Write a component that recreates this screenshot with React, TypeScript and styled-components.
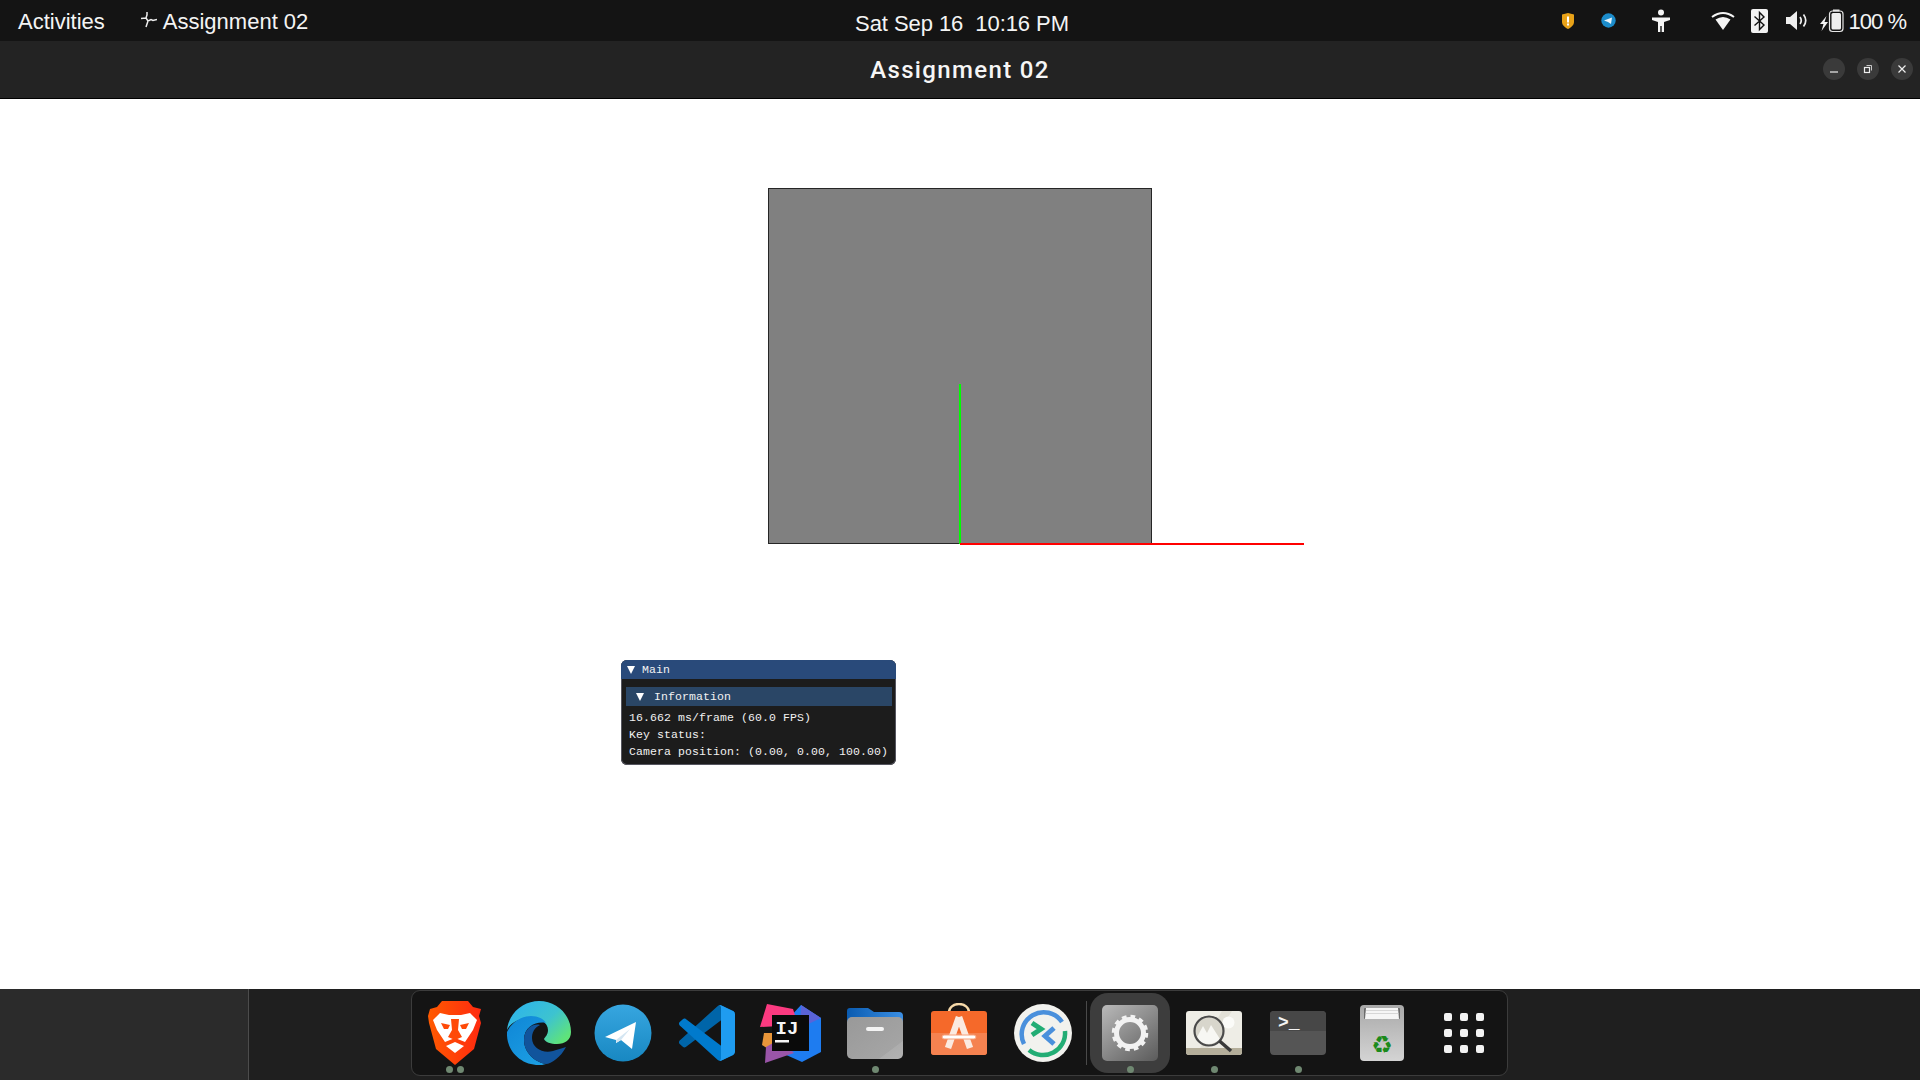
import React from 'react';
import styled, { createGlobalStyle } from 'styled-components';

const Global = createGlobalStyle`
  html, body { margin: 0; padding: 0; background: #fff; overflow: hidden; }
  #root { width: 1920px; height: 1080px; }
  * { box-sizing: border-box; }
`;

const Screen = styled.div`
  width: 1920px; height: 1080px; display: flex; flex-direction: column;
  font-family: "Liberation Sans", Arial, sans-serif; color: #fff;
`;

/* ---------- top bar ---------- */
const TopBar = styled.header`
  height: 41px; flex: none; background: #141414; display: grid;
  grid-template-columns: 1fr auto 1fr; align-items: center;
  font-size: 22px; padding: 0 14px 0 18px;
`;
const TopLeft = styled.div`display: flex; align-items: center;`;
const TopLabel = styled.span<{ $tight?: boolean }>`
  color: #f4f4f4; white-space: nowrap; padding-top: 2px;
  letter-spacing: ${p => (p.$tight ? '-1px' : '0')};
`;
const AppMenu = styled.div`display: flex; align-items: center; gap: 6px; margin-left: 35px;`;
const Clock = styled.div`
  color: #f4f4f4; white-space: pre; padding-top: 6px; font-size: 22px; letter-spacing: -0.07px;
`;
const Tray = styled.div`display: flex; align-items: center; justify-content: flex-end;`;
const TraySlot = styled.span<{ $left: number }>`
  display: flex; align-items: center; margin-left: ${p => p.$left}px;
`;

/* ---------- header bar ---------- */
const HeaderBar = styled.div`
  height: 58px; flex: none; background: #232323; border-bottom: 1px solid #000;
  display: flex; align-items: center; justify-content: center; position: relative;
`;
const Title = styled.h1`
  margin: 0; font: 500 24px Roboto, "Liberation Sans", sans-serif; letter-spacing: 1.35px;
  color: #f6f6f6; white-space: pre;
`;
const WindowControls = styled.div`
  position: absolute; right: 7px; top: 17px; display: flex; gap: 12px;
`;
const WinButton = styled.button`
  width: 22px; height: 22px; border-radius: 50%; border: 0; padding: 0; background: #3a3a3a;
  display: flex; align-items: center; justify-content: center;
`;

/* ---------- GL window canvas ---------- */
const Canvas = styled.main`flex: 1; position: relative; background: #fff; min-height: 0;`;
const Scene = styled.svg`position: absolute; left: 0; top: 0;`;
const ImGuiWindow = styled.section`
  position: absolute; left: 621px; top: 561px; width: 275px; height: 105px;
  background: #1c1c1c; border-radius: 6px; overflow: hidden;
  box-shadow: inset 0 0 0 1px #55555f;
  font: 11.5px "Liberation Mono", "DejaVu Sans Mono", monospace; letter-spacing: 0.1px;
  color: #f2f2f2; white-space: pre;
`;
const ImGuiTitle = styled.div`
  height: 19px; background: #294a7a; display: flex; align-items: center; padding-left: 6px; gap: 7px;
`;
const Triangle = styled.i`
  width: 0; height: 0; border-left: 4.5px solid transparent; border-right: 4.5px solid transparent;
  border-top: 8px solid #fff; display: block;
`;
const ImGuiBody = styled.div`padding: 8px 4px 0 5px;`;
const ImGuiHeader = styled.div`
  height: 19px; background: #2a4666; display: flex; align-items: center; padding-left: 10px; gap: 10px;
`;
const ImGuiLines = styled.div`margin-top: 3px;`;
const ImGuiLine = styled.div`height: 17px; line-height: 17px; padding-left: 3px;`;

/* ---------- dock ---------- */
const DockArea = styled.footer`
  height: 91px; flex: none; background: #1f1f1f; display: flex; padding-top: 1px;
`;
const DockSide = styled.div`
  width: 249px; margin-top: -1px; background: #2b2b2b; border-right: 1px solid #4c4c4c; flex: none;
`;
const Dock = styled.nav`
  margin-left: 162px; width: 1097px; height: 86px; background: #141414;
  border: 1px solid #3c3c3c; border-radius: 9px; padding: 0 1px; display: flex;
`;
const DockItem = styled.div<{ $active?: boolean }>`
  width: 84px; height: 84px; flex: none; position: relative;
  display: flex; align-items: center; justify-content: center;
  &::before {
    content: ""; position: absolute; inset: 2px; border-radius: 18px;
    background: ${p => (p.$active ? '#3d3d3d' : 'transparent')};
  }
  & > svg, & > div { position: relative; }
`;
const DockSep = styled.div`
  width: 1px; height: 64px; background: #4a4a4a; margin: 10px 1px 0 1px; flex: none;
`;
const Dots = styled.div`
  position: absolute !important; left: 0; right: 0; bottom: 2px; display: flex; justify-content: center; gap: 4px;
`;
const Dot = styled.span`width: 7px; height: 7px; border-radius: 50%; background: #6f8871; display: block;`;
const AppGrid = styled.div`
  display: grid; grid-template-columns: repeat(3, 8px); grid-auto-rows: 8px; gap: 8px; margin-left: -4px;
`;
const AppGridCell = styled.span`background: #f2f2f2; border-radius: 2px;`;

/* ---------- icons ---------- */
const AppSpark = () => (
  <svg width="17" height="17" viewBox="0 0 17 17" fill="none" stroke="#eee" strokeWidth="1.500">
    <path d="M7 0v3L6 6l-5 .5M6 6l2 3 3-1.500 2 1 4-1M8 9l-2 6" />
  </svg>
);
const Shield = () => (
  <svg width="14" height="16" viewBox="0 0 14 16">
    <path d="M1 1.500 7 0l6 1.500V9c0 3-3 5.500-6 7-3-1.500-6-4-6-7Z" fill="#e8a218" />
    <rect x="6" y="3.500" width="2" height="6" fill="#fff" />
    <rect x="6" y="10.500" width="2" height="2" fill="#fff" />
  </svg>
);
const TinyTelegram = () => (
  <svg width="15" height="15" viewBox="0 0 15 15">
    <circle cx="7.500" cy="7.500" r="7.200" fill="#1c8ccb" />
    <path d="M3 7.500 11 4.500 10 11 7 9Z" fill="#e8f4fb" />
  </svg>
);
const Person = () => (
  <svg width="20" height="24" viewBox="0 0 20 24" fill="#f5f5f5">
    <circle cx="10" cy="3.600" r="3" />
    <path d="M1 8.500h18v2.400l-6 2V23h-2.300v-6H9.300v6H7V12.900l-6-2Z" />
  </svg>
);
const Wifi = () => (
  <svg width="24" height="20" viewBox="0 0 24 20">
    <path d="M1 6Q12-2 23 6" fill="none" stroke="#f5f5f5" strokeWidth="2" />
    <path d="M4.500 8.500Q12 3.500 19.500 8.500L12 19Z" fill="#f5f5f5" />
  </svg>
);
const Bluetooth = () => (
  <svg width="17" height="24" viewBox="0 0 17 24">
    <rect width="17" height="24" rx="2" fill="#f2f2f2" />
    <path d="M3.500 7.500 13 16l-4.500 4.500v-17L13 8l-9.500 8.500" fill="none" stroke="#111" strokeWidth="1.400" />
  </svg>
);
const Volume = () => (
  <svg width="22" height="21" viewBox="0 0 22 21" fill="none">
    <path d="M0 7h4l7-6v19l-7-6H0Z" fill="#eee" />
    <path d="M14 7q2.500 3.500 0 7M17.500 4.500q4.500 6 0 12" stroke="#eee" strokeWidth="1.700" />
  </svg>
);
const Battery = () => (
  <svg width="24" height="24" viewBox="0 0 24 24" fill="none">
    <path d="M6.500 7 0 15h3.500L1.500 22 8 13H4.500Z" fill="#f2f2f2" />
    <rect x="9.500" y="2" width="13.500" height="20.500" rx="3" stroke="#e6e6e6" strokeWidth="1.200" />
    <rect x="13" y="0.500" width="6.500" height="2" fill="#e6e6e6" />
    <rect x="11.500" y="4" width="9.500" height="16.500" rx="1.500" fill="#efefef" />
  </svg>
);

const Brave = () => (
  <svg width="54" height="66" viewBox="0 0 54 66">
    <defs>
      <linearGradient id="brv" x1="0" y1="0.3" x2="1" y2="0.3">
        <stop offset="0" stopColor="#ff5a00" />
        <stop offset="1" stopColor="#ff2a10" />
      </linearGradient>
    </defs>
    <path d="M14 1H40L45 7 53 9 51 16 53 23 46 49 27 65 8 49 1 23 0 16 2 9 9 7Z" fill="url(#brv)" />
    <path d="M12 13 21 15H33L42 13 49 20 45 30 37 42 27 38 17 42 9 30 5 20Z" fill="#fff" />
    <path d="M23 19H31L30 30 34 37 27 40 20 37 24 30Z" fill="#ff4a08" />
    <path d="M13 23 22 25 20 29H16ZM41 23 32 25 34 29H38Z" fill="#ff4a08" />
    <path d="M18 46 27 42 36 46 27 53Z" fill="#fff" />
  </svg>
);
const Edge = () => (
  <svg width="64" height="64" viewBox="0 0 64 64">
    <defs>
      <linearGradient id="edgeTop" x1="0.1" y1="0.2" x2="0.95" y2="0.8">
        <stop offset="0" stopColor="#2fb6e8" />
        <stop offset="0.55" stopColor="#3dc3d0" />
        <stop offset="1" stopColor="#5fe37a" />
      </linearGradient>
      <linearGradient id="edgeBody" x1="0" y1="0" x2="0.7" y2="1">
        <stop offset="0" stopColor="#0f86d6" />
        <stop offset="1" stopColor="#1b9de2" />
      </linearGradient>
    </defs>
    <path d="M0 29C2 11 17 0 32 0 50 0 64 14 64 31 64 39 58 43 50 43 44 43 38 41 37 38 38 36 41 34 41 29 41 21 32 17 24 17 12 17 3 22 0 29Z" fill="url(#edgeTop)" />
    <path d="M0 31C4 22 14 15 24 15 31 15 37 18 39 22 30 20 17 25 17 39 17 51 27 61 39 63 36 64 34 64 32 64 14 64-1 50 0 31Z" fill="url(#edgeBody)" />
    <path d="M17 39C17 28 26 22 33 24 27 27 25 32 25 37 25 47 36 53 46 50 50 49 55 47 59 46 54 56 44 63 39 63 27 61 17 51 17 39Z" fill="#11549c" />
  </svg>
);
const Telegram = () => (
  <svg width="58" height="58" viewBox="0 0 58 58">
    <defs>
      <linearGradient id="tg" x1="0.5" y1="0" x2="0.5" y2="1">
        <stop offset="0" stopColor="#37a6e0" />
        <stop offset="1" stopColor="#1888c2" />
      </linearGradient>
    </defs>
    <circle cx="29" cy="29" r="28.500" fill="url(#tg)" />
    <path d="M11 33 42 18 38 45 27 36 22 39 22 36Z" fill="#fff" />
    <path d="M22 36 36 25 27 36 22 39Z" fill="#d4e6f2" />
  </svg>
);
const VSCode = () => (
  <svg width="56" height="56" viewBox="0 0 100 100">
    <path d="M96.4614 10.7962L75.8569 0.875542C73.4719 -0.272773 70.6217 0.211611 68.75 2.08333L1.29858 63.5832C-0.515693 65.2373 -0.513607 68.0937 1.30308 69.7452L6.81272 74.754C8.29793 76.1042 10.5347 76.2036 12.1338 74.9905L93.3609 13.3699C96.086 11.3026 100 13.2462 100 16.6667V16.4275C100 14.0265 98.6246 11.8378 96.4614 10.7962Z" fill="#0065A9" />
    <path d="M96.4614 89.2038L75.8569 99.1245C73.4719 100.273 70.6217 99.7884 68.75 97.9167L1.29858 36.4168C-0.515693 34.7627 -0.513607 31.9063 1.30308 30.2548L6.81272 25.246C8.29793 23.8958 10.5347 23.7964 12.1338 25.0095L93.3609 86.6301C96.086 88.6974 100 86.7538 100 83.3333V83.5725C100 85.9735 98.6246 88.1622 96.4614 89.2038Z" fill="#007ACC" />
    <path d="M75.8578 99.1263C73.4721 100.274 70.6219 99.7885 68.75 97.9166C71.0564 100.223 75 98.5895 75 95.3278V4.67213C75 1.41039 71.0564 -0.223106 68.75 2.08329C70.6219 0.211402 73.4721 -0.273666 75.8578 0.873633L96.4587 10.7807C98.6234 11.8217 100 14.0112 100 16.4132V83.5871C100 85.9891 98.6234 88.1786 96.4586 89.2196L75.8578 99.1263Z" fill="#1F9CF0" />
  </svg>
);
const IntelliJ = () => (
  <svg width="62" height="60" viewBox="0 0 62 60">
    <path d="M41 2 61 15V49L42 59 24 51 30 14Z" fill="#1e7cf0" />
    <path d="M41 2 61 15 40 25Z" fill="#5a63d8" />
    <path d="M4 30 2 42 10 47 24 30Z" fill="#e8963a" />
    <path d="M6 44 5 60 34 50 20 36Z" fill="#9a55a8" />
    <path d="M7 1 33 6 38 22 0 24Z" fill="#fb3a80" />
    <rect x="12" y="12" width="37" height="36" fill="#0a0a0a" />
    <text x="15.500" y="31" fontFamily="'Liberation Mono', monospace" fontWeight="700" fontSize="19" fill="#f5f5f5">IJ</text>
    <rect x="15" y="37" width="14" height="2.500" fill="#f5f5f5" />
  </svg>
);
const Files = () => (
  <svg width="56" height="52" viewBox="0 0 56 52">
    <defs>
      <linearGradient id="fold" x1="0" y1="0" x2="1" y2="1">
        <stop offset="0" stopColor="#999" />
        <stop offset="0.78" stopColor="#a4a4a4" />
        <stop offset="0.79" stopColor="#adadad" />
        <stop offset="1" stopColor="#b2b2b2" />
      </linearGradient>
      <linearGradient id="foldTop" x1="0" y1="0" x2="1" y2="0">
        <stop offset="0" stopColor="#0a5bb0" />
        <stop offset="1" stopColor="#3b8fe4" />
      </linearGradient>
    </defs>
    <path d="M0 4a3 3 0 0 1 3-3h18l6 4h25a4 4 0 0 1 4 4v9H0Z" fill="url(#foldTop)" />
    <rect y="10" width="56" height="42" rx="5" fill="url(#fold)" />
    <rect x="19" y="20" width="18" height="4" rx="2" fill="#f4f4f4" />
  </svg>
);
const Store = () => (
  <svg width="56" height="60" viewBox="0 -8 56 60" fill="none">
    <path d="M18 2V1a10 8 0 0 1 20 0v2" stroke="#f5d8a8" strokeWidth="2.400" />
    <rect y="0" width="56" height="44" rx="3" fill="#f5692a" />
    <path d="M0 22h56v19a3 3 0 0 1-3 3H3a3 3 0 0 1-3-3Z" fill="#f58250" />
    <path d="M28 6 17 37M28 6 39 37" stroke="#fbeae0" strokeWidth="6.500" />
    <rect x="11" y="24" width="34" height="4" rx="2" fill="#fff" stroke="#f6a07a" strokeWidth="1" />
  </svg>
);
const Remote = () => (
  <svg width="58" height="58" viewBox="0 0 58 58" fill="none">
    <circle cx="29" cy="29" r="29" fill="#f2f2ee" />
    <path d="M10 40A22 22 0 0 1 48 18" stroke="#4a90dc" strokeWidth="4.500" />
    <path d="M51 27A22 22 0 0 1 15 46" stroke="#22ad74" strokeWidth="4.500" />
    <path d="M18 19 27 25 18 31" stroke="#22ad74" strokeWidth="5" />
    <path d="M40 24 31 32 40 40" stroke="#4a90dc" strokeWidth="5" />
  </svg>
);
const Settings = () => (
  <svg width="56" height="56" viewBox="0 0 56 56" fill="none">
    <defs>
      <linearGradient id="setg" x1="0.1" y1="0" x2="0.9" y2="1">
        <stop offset="0" stopColor="#b5b5b5" />
        <stop offset="1" stopColor="#5f5f5f" />
      </linearGradient>
    </defs>
    <rect width="56" height="56" rx="5" fill="url(#setg)" />
    <circle cx="28" cy="28" r="13.500" stroke="#f2f2f2" strokeWidth="5" />
    <circle cx="28" cy="28" r="16.500" stroke="#f2f2f2" strokeWidth="3.500" strokeDasharray="4.640 4"/>
  </svg>
);
const ImageViewer = () => (
  <svg width="56" height="44" viewBox="0 0 56 44" fill="none">
    <rect width="56" height="44" rx="3" fill="#eeede6" />
    <path d="M0 37h56v4a3 3 0 0 1-3 3H3a3 3 0 0 1-3-3Z" fill="#b4ae9a" />
    <path d="M36 0 14 37h8L46 0Z" fill="#e2e0d6" />
    <circle cx="42.500" cy="11.500" r="6" fill="#fbfbf8" />
    <circle cx="23" cy="20" r="14.500" fill="#d8d6cc" />
    <path d="M10 28 17 15 21 22 25 14 34 28Q23 38 10 28Z" fill="#f7f7f3" />
    <circle cx="23" cy="20" r="14.500" stroke="#4a4a4a" strokeWidth="2.200" />
    <path d="M33.500 30 45 40" stroke="#3a3a3a" strokeWidth="3.500" />
  </svg>
);
const Terminal = () => (
  <svg width="56" height="44" viewBox="0 0 56 44">
    <rect width="56" height="44" rx="4" fill="#555" />
    <path d="M0 20V4a4 4 0 0 1 4-4h48a4 4 0 0 1 4 4v16Z" fill="#474747" />
    <text x="8" y="17" fontFamily="'Liberation Mono', monospace" fontWeight="700" fontSize="18" fill="#f4f4f4">&gt;_</text>
  </svg>
);
const Trash = () => (
  <svg width="44" height="56" viewBox="0 0 44 56">
    <defs>
      <linearGradient id="trg" x1="0" y1="0" x2="0" y2="1">
        <stop offset="0" stopColor="#a9a9a9" />
        <stop offset="1" stopColor="#d4d4d4" />
      </linearGradient>
    </defs>
    <rect width="44" height="56" rx="4" fill="url(#trg)" />
    <rect x="4" y="3" width="36" height="11" rx="1" fill="#6c6c6c" />
    <path d="M6 3H38L39 14H5Z" fill="#f6f6f6" />
    <path d="M6 5.500H38M5.500 8.500H38.500" stroke="#cfcfcf" strokeWidth=".8" />
    <text x="22" y="48" textAnchor="middle" fontFamily="'DejaVu Sans', sans-serif" fontSize="24" fill="#1b8a1b">♻</text>
  </svg>
);

const appIcons: { key: string; Icon: React.FC; dots: number }[] = [
  { key: 'brave', Icon: Brave, dots: 2 },
  { key: 'edge', Icon: Edge, dots: 0 },
  { key: 'telegram', Icon: Telegram, dots: 0 },
  { key: 'vscode', Icon: VSCode, dots: 0 },
  { key: 'idea', Icon: IntelliJ, dots: 0 },
  { key: 'files', Icon: Files, dots: 1 },
  { key: 'store', Icon: Store, dots: 0 },
  { key: 'remote', Icon: Remote, dots: 0 },
];
const sysIcons: { key: string; Icon: React.FC; dots: number; active?: boolean }[] = [
  { key: 'settings', Icon: Settings, dots: 1, active: true },
  { key: 'viewer', Icon: ImageViewer, dots: 1 },
  { key: 'terminal', Icon: Terminal, dots: 1 },
  { key: 'trash', Icon: Trash, dots: 0 },
];

const renderItem = (it: { key: string; Icon: React.FC; dots: number; active?: boolean }) => (
  <DockItem key={it.key} $active={it.active}>
    <it.Icon />
    {it.dots > 0 && (
      <Dots>
        {Array.from({ length: it.dots }).map((_, i) => <Dot key={i} />)}
      </Dots>
    )}
  </DockItem>
);

export default function App() {
  return (
    <Screen>
      <Global />
      <TopBar>
        <TopLeft>
          <TopLabel>Activities</TopLabel>
          <AppMenu>
            <AppSpark />
            <TopLabel>Assignment 02</TopLabel>
          </AppMenu>
        </TopLeft>
        <Clock>Sat Sep 16  10:16 PM</Clock>
        <Tray>
          <TraySlot $left={0}><Shield /></TraySlot>
          <TraySlot $left={26}><TinyTelegram /></TraySlot>
          <TraySlot $left={35}><Person /></TraySlot>
          <TraySlot $left={40}><Wifi /></TraySlot>
          <TraySlot $left={16}><Bluetooth /></TraySlot>
          <TraySlot $left={18}><Volume /></TraySlot>
          <TraySlot $left={12}><Battery /></TraySlot>
          <TraySlot $left={5}><TopLabel $tight>100 %</TopLabel></TraySlot>
        </Tray>
      </TopBar>
      <HeaderBar>
        <Title>Assignment 02</Title>
        <WindowControls>
          <WinButton aria-label="minimize">
            <svg width="10" height="10" viewBox="0 0 10 10"><path d="M1 8h8" stroke="#eee" strokeWidth="1.200" /></svg>
          </WinButton>
          <WinButton aria-label="restore">
            <svg width="10" height="10" viewBox="0 0 10 10" fill="none" stroke="#eee"><rect x="1.500" y="3.500" width="5" height="5" strokeWidth="1.200" /><path d="M3.500 1.500h5v5" strokeWidth=".8" /></svg>
          </WinButton>
          <WinButton aria-label="close">
            <svg width="10" height="10" viewBox="0 0 10 10"><path d="M1.500 1.500l7 7M8.500 1.500l-7 7" stroke="#eee" strokeWidth="1.200" /></svg>
          </WinButton>
        </WindowControls>
      </HeaderBar>
      <Canvas>
        <Scene width="1920" height="890" viewBox="0 0 1920 890">
          <rect x="768.500" y="89.500" width="383" height="355" fill="#808080" stroke="#262626" strokeWidth="1" />
          <rect x="959" y="285" width="2" height="160" fill="#00ff00" />
          <rect x="960" y="444" width="344" height="2" fill="#ff0000" />
        </Scene>
        <ImGuiWindow>
          <ImGuiTitle><Triangle />Main</ImGuiTitle>
          <ImGuiBody>
            <ImGuiHeader><Triangle />Information</ImGuiHeader>
            <ImGuiLines>
              <ImGuiLine>16.662 ms/frame (60.0 FPS)</ImGuiLine>
              <ImGuiLine>Key status:</ImGuiLine>
              <ImGuiLine>Camera position: (0.00, 0.00, 100.00)</ImGuiLine>
            </ImGuiLines>
          </ImGuiBody>
        </ImGuiWindow>
      </Canvas>
      <DockArea>
        <DockSide />
        <Dock>
          {appIcons.map(renderItem)}
          <DockSep />
          {sysIcons.map(renderItem)}
          <DockItem>
            <AppGrid>
              {Array.from({ length: 9 }).map((_, i) => <AppGridCell key={i} />)}
            </AppGrid>
          </DockItem>
        </Dock>
      </DockArea>
    </Screen>
  );
}
